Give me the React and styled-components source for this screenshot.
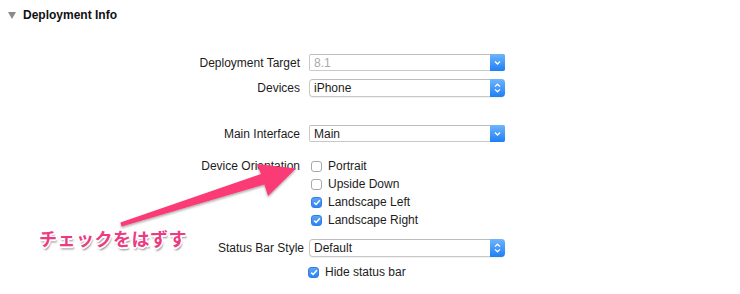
import React from 'react'
import styled, { createGlobalStyle } from 'styled-components';

const GlobalStyle = createGlobalStyle`
    html, body {
        margin: 0;
        padding: 0;
        background: #ffffff;
    }
    body {
        font-family: "Liberation Sans", Helvetica, Arial, sans-serif;
        font-size: 12px;
        color: #1c1c1c;
    }
`;

const Chevron = ({ both }) => (
    <svg width="7" height={both ? 10 : 6} viewBox={both ? '0 0 7 10' : '0 0 7 6'}>
        {both ? (
            <>
                <path d="M1 3.6 L3.5 1.2 L6 3.6" fill="none" stroke="#fff" strokeWidth="1.3" />
                <path d="M1 6.4 L3.5 8.8 L6 6.4" fill="none" stroke="#fff" strokeWidth="1.3" />
            </>
        ) : (
            <path d="M1 1.5 L3.5 4 L6 1.5" fill="none" stroke="#fff" strokeWidth="1.3" />
        )}
    </svg>
);

const Check = () => (
    <svg width="8" height="7" viewBox="0 0 8 7">
        <path d="M1.2 3.6 L3.1 5.5 L6.9 1.2" fill="none" stroke="#fff" strokeWidth="1.5" />
    </svg>
);

const Select = ({ value, disabled, popup }) => (
    <SelectBox $popup={popup}>
        <SelectValue $disabled={disabled}>{value}</SelectValue>
        <SelectButton $popup={popup}>
            <Chevron both={popup} />
        </SelectButton>
    </SelectBox>
);

const Option = ({ label, checked, shift }) => (
    <OptionRow $shift={shift}>
        <Box $checked={checked}>{checked && <Check />}</Box>
        <span>{label}</span>
    </OptionRow>
);

export default function App() {
    return (
        <Page>
            <GlobalStyle />
            <SectionHeader>
                <Disclosure />
                <Title>Deployment Info</Title>
            </SectionHeader>

            <Form>
                <Row $top={32} $height={17}>
                    <Label>Deployment Target</Label>
                    <Select value="8.1" disabled />
                </Row>
                <Row $top={8} $height={18}>
                    <Label>Devices</Label>
                    <Select value="iPhone" popup />
                </Row>
                <Row $top={28} $height={17}>
                    <Label>Main Interface</Label>
                    <Select value="Main" />
                </Row>
                <Row $top={15} $align="start">
                    <Label $line={18}>Device Orientation</Label>
                    <Options>
                        <Option label="Portrait" />
                        <Option label="Upside Down" />
                        <Option label="Landscape Left" checked />
                        <Option label="Landscape Right" checked />
                    </Options>
                </Row>
                <Row $top={10} $height={17}>
                    <Label $clip>Status Bar Style</Label>
                    <Select value="Default" popup />
                </Row>
                <Row $top={7} $height={18}>
                    <span />
                    <Option label="Hide status bar" checked shift={-1} />
                </Row>
            </Form>

            <Arrow viewBox="0 0 740 294" width="740" height="294">
                <defs>
                    <filter id="arrowShadow" x="-10%" y="-10%" width="120%" height="130%">
                        <feDropShadow dx="0" dy="1.5" stdDeviation="1.2" floodColor="#000" floodOpacity="0.35" />
                    </filter>
                </defs>
                <polygon
                    points="120.4,222.6 261,174 257,164 296,168.5 268,196 264.4,184.4 121.6,226.6"
                    fill="#fb3a76"
                    filter="url(#arrowShadow)"
                />
            </Arrow>
            <Callout>チェックをはずす</Callout>
        </Page>
    );
}

const Page = styled.div`
    position: relative;
    width: 740px;
    height: 294px;
    overflow: hidden;
    background: #fff;
`;

const SectionHeader = styled.div`
    display: flex;
    align-items: center;
    gap: 7px;
    padding: 8px 0 0 8px;
    height: 14px;
`;

const Disclosure = styled.span`
    width: 0;
    height: 0;
    border-left: 4px solid transparent;
    border-right: 4px solid transparent;
    border-top: 7px solid #8a8a8a;
`;

const Title = styled.div`
    font-weight: 700;
    font-size: 12px;
    color: #111;
`;

const Form = styled.div`
    display: flex;
    flex-direction: column;
`;

const Row = styled.div`
    display: grid;
    grid-template-columns: 300px 196px;
    column-gap: 9px;
    align-items: ${({ $align }) => $align || 'center'};
    margin-top: ${({ $top }) => $top}px;
    height: ${({ $height }) => ($height ? `${$height}px` : 'auto')};
`;

const Label = styled.div`
    text-align: right;
    white-space: nowrap;
    line-height: ${({ $line }) => ($line ? `${$line}px` : 'normal')};
    margin-right: ${({ $clip }) => ($clip ? '-4px' : '0')};
    color: #1c1c1c;
`;

const SelectBox = styled.div`
    position: relative;
    z-index: 1;
    display: flex;
    align-items: stretch;
    height: ${({ $popup }) => ($popup ? '18px' : '17px')};
    border: 1px solid #c9c9c9;
    border-top-color: #bdbdbd;
    border-radius: ${({ $popup }) => ($popup ? '4px' : '2px')};
    background: #fff;
    box-sizing: border-box;
    box-shadow: ${({ $popup }) => ($popup ? '0 1px 0 rgba(0,0,0,0.06)' : 'none')};
`;

const SelectValue = styled.div`
    flex: 1;
    display: flex;
    align-items: center;
    padding-left: 4px;
    color: ${({ $disabled }) => ($disabled ? '#a9a9a9' : '#1c1c1c')};
`;

const SelectButton = styled.div`
    width: 15px;
    margin: -1px -1px -1px 0;
    display: flex;
    align-items: center;
    justify-content: center;
    border-radius: ${({ $popup }) => ($popup ? '0 4px 4px 0' : '0 2px 2px 0')};
    background: linear-gradient(#6fb5fb, #1e7ff5);
`;

const Options = styled.div`
    display: flex;
    flex-direction: column;
`;

const OptionRow = styled.div`
    display: flex;
    align-items: center;
    gap: 6px;
    height: 18px;
    margin-left: ${({ $shift }) => ($shift ? `${$shift}px` : '2px')};
`;

const Box = styled.span`
    width: 11px;
    height: 11px;
    box-sizing: border-box;
    border-radius: 3px;
    display: flex;
    align-items: center;
    justify-content: center;
    background: ${({ $checked }) => ($checked ? 'linear-gradient(#5aa4f9, #2f84f3)' : '#fff')};
    border: 1px solid ${({ $checked }) => ($checked ? '#2f7fe8' : '#a9a9a9')};
`;

const Arrow = styled.svg`
    position: absolute;
    left: 0;
    top: 0;
    pointer-events: none;
    z-index: 2;
`;

const Callout = styled.div`
    position: absolute;
    left: 39px;
    top: 225px;
    z-index: 3;
    font-family: "Noto Sans CJK JP", "Noto Sans", sans-serif;
    font-weight: 700;
    font-size: 18px;
    letter-spacing: 0.5px;
    color: #ec3b82;
    text-shadow:
        -1px -1px 0 #fff, 1px -1px 0 #fff, -1px 1px 0 #fff, 1px 1px 0 #fff,
        0 -1.5px 0 #fff, 0 1.5px 0 #fff, -1.5px 0 0 #fff, 1.5px 0 0 #fff,
        1px 2.5px 2px rgba(0, 0, 0, 0.45);
`;
